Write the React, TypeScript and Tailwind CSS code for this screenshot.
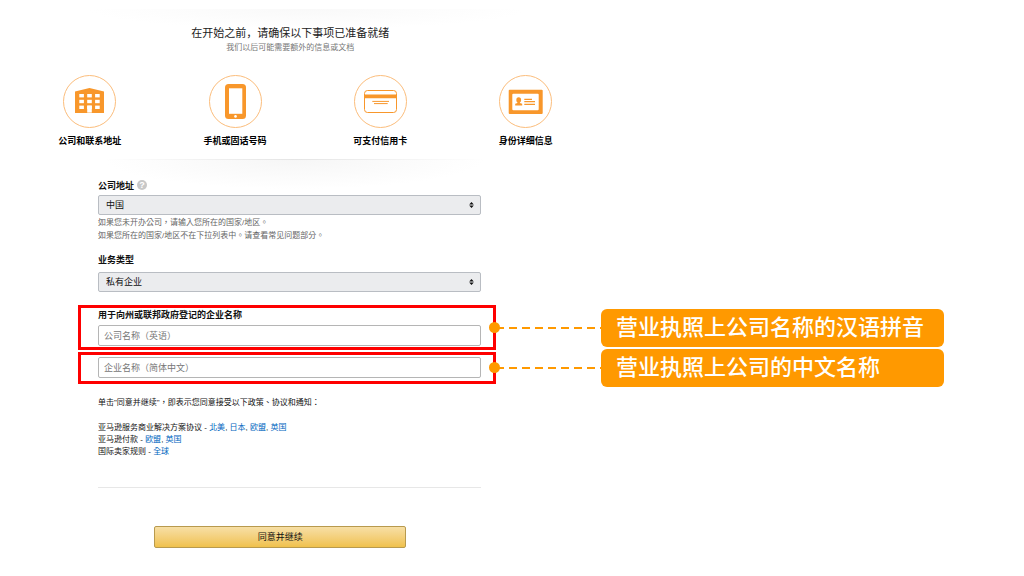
import { useState } from "react";
import type { ReactNode } from "react";

const ORANGE = "#f8972b";

function BuildingIcon() {
  return (
    <g fill={ORANGE}>
      <path d="M12 16.5 26.5 13 41 16.5V38H12z" />
      <g fill="#fff">
        {[19, 24.8, 30.6].map((y) => (
          <g key={y}>
            <rect x="16.3" y={y} width="4.6" height="3.4" />
            <rect x="24.2" y={y} width="4.6" height="3.4" />
            <rect x="32.1" y={y} width="4.6" height="3.4" />
          </g>
        ))}
        <rect x="24.2" y="30.6" width="4.6" height="7" />
      </g>
    </g>
  );
}

function PhoneIcon() {
  return (
    <g>
      <rect x="16" y="9" width="21" height="35" rx="3.5" fill={ORANGE} />
      <rect x="20" y="13.3" width="13.3" height="25.5" fill="#fff" />
      <circle cx="26.5" cy="41.4" r="1.3" fill="#fff" />
    </g>
  );
}

function CardIcon() {
  return (
    <g fill="none" stroke={ORANGE}>
      <rect x="10.5" y="15.5" width="32" height="22" rx="3" />
      <path d="M10.5 21.4h32" strokeWidth="3.8" />
      <path d="M18.3 26.4h16.7M20 28.6h13.7" strokeWidth="1" />
    </g>
  );
}

function IdIcon() {
  return (
    <g fill={ORANGE}>
      <rect x="9.7" y="14.7" width="34" height="24.3" rx="1" />
      <rect x="13.3" y="18.7" width="26.4" height="16.6" rx="1" fill="#fff" />
      <ellipse cx="19.7" cy="25" rx="2.4" ry="2.8" />
      <path d="M18.5 26.5h2.4v1.5l2.3.7V30.500h-7v-1.800l2.300-.7z" />
      <path d="M25.3 24.3h7.7M25.3 26.7h10.7M25.3 29.3h10.7" stroke={ORANGE} strokeWidth="1.2" />
    </g>
  );
}

const requirements = [
  { title: "公司和联系地址", icon: <BuildingIcon /> },
  { title: "手机或固话号码", icon: <PhoneIcon /> },
  { title: "可支付信用卡", icon: <CardIcon /> },
  { title: "身份详细信息", icon: <IdIcon /> },
];

const policies = [
  { name: "亚马逊服务商业解决方案协议", links: ["北美", "日本", "欧盟", "英国"] },
  { name: "亚马逊付款", links: ["欧盟", "英国"] },
  { name: "国际卖家规则", links: ["全球"] },
];

function SelectField({ id, value }: { id: string; value: string }) {
  return (
    <div className="relative">
      <select
        id={id}
        className="block h-5 w-full appearance-none rounded-xs border border-[#b9bdc3] bg-[#ebecee] pl-[7px] text-[9px] leading-4 text-[#111]"
      >
        <option>{value}</option>
      </select>
      <svg viewBox="0 0 5 6" className="pointer-events-none absolute right-[7px] top-[7px] h-1.5 w-[5px]">
        <path d="M2.5 0 4.8 2.5H.2zM2.5 6 .2 3.5h4.6z" fill="#111" />
      </svg>
    </div>
  );
}

// Red highlight frame, dashed connector and orange note on one line
function CalloutRow({ note, children }: { note: string; children: ReactNode }) {
  return (
    <div className="grid grid-cols-[418fr_105fr_343fr] items-center pl-[78px] pr-20">
      <div className="border-3 border-[#fe0000] pl-[17px] pr-3">{children}</div>
      <div className="relative h-[2px] bg-[repeating-linear-gradient(to_right,#ff9900_0,#ff9900_8px,transparent_8px,transparent_13px)]">
        <span className="absolute -left-[7px] -top-[5px] size-[11px] rounded-full bg-[#ff9900]" />
      </div>
      <div className="whitespace-nowrap rounded-md bg-[#ff9900] pl-[15px] text-[22px] font-medium leading-[38px] text-white">
        {note}
      </div>
    </div>
  );
}

export default function App() {
  const [englishName, setEnglishName] = useState("");
  const [chineseName, setChineseName] = useState("");

  return (
    <main className="bg-white pt-[9px] font-['Liberation_Sans','Noto_Sans_CJK_SC',sans-serif] text-[#111]" lang="zh-CN">
      {/* Header */}
      <header className="w-3/5 bg-[radial-gradient(ellipse_220px_20px_at_50%_0,#f9f9f9,#ffffff)] bg-no-repeat pl-[17px] pr-4 pt-4 text-center">
        <h1 className="pr-[35px] text-[11px] leading-4 text-[#222]">在开始之前，请确保以下事项已准备就绪</h1>
        <p className="pr-[35px] text-[8px] leading-[14px] text-[#777]">我们以后可能需要额外的信息或文档</p>
        <ul className="mt-5 grid grid-cols-4">
          {requirements.map((item) => (
            <li key={item.title} className="flex flex-col items-center">
              <svg viewBox="0 0 53 53" className="size-[53px]">
                <circle cx="26.5" cy="26.5" r="26" fill="#fff" stroke="#fbbd7c" />
                {item.icon}
              </svg>
              <h2 className="mt-1.5 text-[9px] font-bold leading-[14px] text-black">{item.title}</h2>
            </li>
          ))}
        </ul>
      </header>

      <form onSubmit={(e) => e.preventDefault()}>
        {/* Company address and business type */}
        <div className="mt-[11px] w-3/5 bg-[radial-gradient(ellipse_190px_30px_at_48%_0,#f6f6f6,#ffffff)] bg-no-repeat">
          <div className="mb-[19px] h-px bg-[radial-gradient(ellipse_190px_10px_at_48%_0,#e4e4e4,#ffffff)]" />
          <div className="ml-[98px] mr-[133px]">
            <div className="mb-0.5 flex h-3.5 items-center gap-[3px]">
              <label htmlFor="country" className="text-[9px] font-bold leading-[14px]">公司地址</label>
              <button
                type="button"
                aria-label="帮助"
                className="mb-0.5 flex size-2.5 items-center justify-center rounded-full bg-[#c8c8c8] text-[9px] font-bold leading-none text-white"
              >
                ?
              </button>
            </div>
            <SelectField id="country" value="中国" />
            <div className="mt-px font-['Liberation_Sans','Noto_Sans_CJK_TC',sans-serif] text-[8px] leading-[13px] text-[#666]" lang="zh-TW">
              <p>如果您未开办公司，请输入您所在的国家/地区。</p>
              <p>如果您所在的国家/地区不在下拉列表中。请查看常见问题部分。</p>
            </div>
            <label htmlFor="business" className="mb-[5px] mt-[11px] block text-[9px] font-bold leading-[14px]">业务类型</label>
            <SelectField id="business" value="私有企业" />
          </div>
        </div>

        {/* Company names */}
        <div className="mt-[13px]">
          <CalloutRow note="营业执照上公司名称的汉语拼音">
            <label htmlFor="name-en" className="block text-[9px] font-bold leading-[14px]">用于向州或联邦政府登记的企业名称</label>
            <input
              id="name-en"
              value={englishName}
              onChange={(e) => setEnglishName(e.target.value)}
              placeholder="公司名称（英语）"
              className="mb-px mt-[3px] block h-[21px] w-full rounded-xs border border-[#b5b5b5] px-[5px] text-[9px] placeholder:text-[#777]"
            />
          </CalloutRow>
        </div>
        <div className="-mt-px">
          <CalloutRow note="营业执照上公司的中文名称">
            <input
              aria-label="企业名称（简体中文）"
              value={chineseName}
              onChange={(e) => setChineseName(e.target.value)}
              placeholder="企业名称（简体中文）"
              className="mb-[3px] mt-0.5 block h-[21px] w-full rounded-xs border border-[#b5b5b5] px-[5px] text-[9px] placeholder:text-[#777]"
            />
          </CalloutRow>
        </div>

        {/* Policies and submit */}
        <div className="w-3/5 pl-[98px] pr-[133px] pt-2.5">
          <div className="font-['Liberation_Sans','Noto_Sans_CJK_TC',sans-serif] text-[8px] leading-3" lang="zh-TW">
            <p>单击"同意并继续"，即表示您同意接受以下政策、协议和通知：</p>
            <ul className="mt-[13px]">
              {policies.map((policy) => (
                <li key={policy.name}>
                  {policy.name} -{" "}
                  {policy.links.map((link, i) => (
                    <span key={link}>
                      {i > 0 && ", "}
                      <a href="#" className="text-[#0066c0]">{link}</a>
                    </span>
                  ))}
                </li>
              ))}
            </ul>
          </div>
          <hr className="mt-[29px] border-[#e7e7e7]" />
          <div className="pl-14 pr-[75px] pt-[38px]">
            <button
              type="submit"
              className="block h-[22px] w-full rounded-xs border border-[#b89a4e] bg-linear-to-b from-[#f7dfa5] to-[#f0c14b] pt-px text-[9px] text-[#111]"
            >
              同意并继续
            </button>
          </div>
        </div>
      </form>
    </main>
  );
}
